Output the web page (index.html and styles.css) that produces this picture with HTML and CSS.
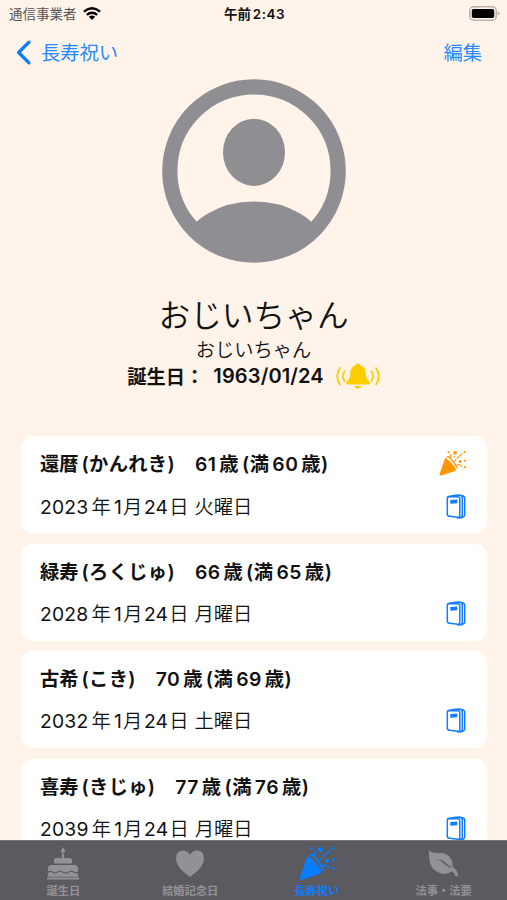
FILE: index.html
```html
<!DOCTYPE html>
<html lang="ja">
<head>
<meta charset="utf-8">
<meta name="viewport" content="width=device-width, initial-scale=1">
<title>長寿祝い</title>
<link rel="stylesheet" href="styles.css">
</head>
<body>
<svg class="defs" width="0" height="0" aria-hidden="true">
  <symbol id="party" viewBox="0 0 36 34">
    <path d="M9.600 10.600C13 13 19.500 19.500 22.300 24.800Q23 27 20.500 28L3 33.700Q.2 34.200 .8 31.500L7.500 12.200Q8.200 10 9.600 10.600Z"/>
    <path d="M10.800 9.500Q11.800 6.800 16 11.500T24.500 24.300" fill="none" stroke="currentColor" stroke-width="1.800"/>
    <path d="M19.500 15.500L22.500 12.500M24.300 10.800L30.800 4.600M14.800 10.500Q17 8.500 15.200 5.800M23.500 20Q26.500 17.500 30.500 21.500" fill="none" stroke="currentColor" stroke-width="1.400" stroke-linecap="round"/>
    <circle cx="21.500" cy="3.400" r="2.500"/><circle cx="28.200" cy="15" r="2"/>
    <circle cx="12.700" cy="2.300" r="1.300"/><circle cx="34" cy="2.500" r="1.400"/>
    <circle cx="34.500" cy="14" r="1.400"/><circle cx="34.400" cy="22.500" r="1.400"/>
    <circle cx="20.500" cy="9" r="1"/>
  </symbol>
  <symbol id="book" viewBox="0 0 20 25">
    <g fill="none" stroke="currentColor" stroke-width="1.500" stroke-linejoin="round" stroke-linecap="round">
      <path d="M1.300 4Q1.300 2.600 2.800 2.500L11.800 2.700Q13.800 2.800 13.800 4.700V21.300Q13.800 23.400 11.800 23.200L3.500 22.300Q1.300 22.100 1.300 20Z"/>
      <path d="M2 2.800Q8 1.300 13.200 1Q16.300 1.300 16.300 4V21.200Q16.300 23.800 11.500 23.900M15 1.600Q18.700 1.900 18.700 4.300V20.800Q18.700 23.300 14.500 23.900"/>
    </g>
    <path d="M4.300 6L11.300 5.500V9.200L4.300 9.800Z"/>
  </symbol>
</svg>
<div class="screen">
  <header class="status">
    <div class="carrier"><span>通信事業者</span>
      <svg class="wifi" viewBox="0 0 18 13"><g fill="none" stroke="#000" stroke-width="2.400"><path d="M.9 4.700Q9-2 17.100 4.700"/><path d="M3.800 7.900Q9 3.600 14.200 7.900"/></g><path fill="#000" d="M9 13L5.900 9.800Q9 7.300 12.100 9.800Z"/></svg>
    </div>
    <div class="clock">午前<b>2:43</b></div>
    <svg class="battery" viewBox="0 0 31 15"><rect x=".8" y=".8" width="26.400" height="13.400" rx="4" fill="none" stroke="#b9b1aa" stroke-width="1.500"/><rect x="2.800" y="2.900" width="22.400" height="9.200" rx="1.800" fill="#000"/><path d="M28.600 5.200Q30.600 6 30.600 7.500T28.600 9.800Z" fill="#b9b1aa"/></svg>
  </header>
  <nav class="navbar">
    <a class="back"><svg viewBox="0 0 15 25"><path d="M13 2.200L2.600 12.500L13 22.800" fill="none" stroke="currentColor" stroke-width="3.200" stroke-linecap="round" stroke-linejoin="round"/></svg><span>長寿祝い</span></a>
    <a class="edit">編集</a>
  </nav>
  <section class="profile">
    <svg class="avatar" viewBox="0 0 184 184"><defs><clipPath id="disc"><circle cx="92" cy="92" r="90"/></clipPath></defs><circle cx="92" cy="92" r="84.200" fill="none" stroke="currentColor" stroke-width="15.200"/><ellipse cx="92" cy="73.300" rx="31" ry="33.600"/><path clip-path="url(#disc)" d="M31 147Q36 140 46 134.500Q66 122.500 92 122.500T138 134.500Q148 140 153 147V184H31Z"/></svg>
    <h1>おじいちゃん</h1>
    <p class="kana">おじいちゃん</p>
    <div class="birthday"><span class="label">誕生日：</span><span class="date">1963/01/24</span>
      <svg class="bell" viewBox="0 0 44 26"><path d="M22 .5Q24 .5 24.700 2.600Q29.500 4 29.800 10.200Q30 15.500 32.200 17.500Q34 19.300 34 20.200Q34 21.500 32.300 21.500H11.700Q10 21.500 10 20.200Q10 19.300 11.800 17.500Q14 15.500 14.200 10.200Q14.500 4 19.300 2.600Q20 .5 22 .5ZM18.300 23H25.700Q24.700 25.700 22 25.700T18.300 23Z"/><path d="M8.500 8.300Q5.300 13.200 8.500 18.100M4 5Q-1.600 13.200 4 21.400M35.500 8.300Q38.700 13.200 35.500 18.100M40 5Q45.600 13.200 40 21.400" fill="none" stroke="currentColor" stroke-width="1.800" stroke-linecap="round"/></svg>
    </div>
  </section>
  <main class="list">
    <article class="card first">
      <div class="row title"><h2><span>還暦</span><span class="paren">(かんれき)</span><span class="age">61<i>歳</i><i>(満</i><i>60</i><i>歳</i>)</span></h2><svg class="party"><use href="#party"/></svg></div>
      <div class="row when"><p><span>2023</span><i>年</i><i>1</i><i>月</i><span class="day">24</span><i>日</i><span class="week">火曜日</span></p><svg class="book"><use href="#book"/></svg></div>
    </article>
    <article class="card">
      <div class="row title"><h2><span>緑寿</span><span class="paren">(ろくじゅ)</span><span class="age">66<i>歳</i><i>(満</i><i>65</i><i>歳</i>)</span></h2></div>
      <div class="row when"><p><span>2028</span><i>年</i><i>1</i><i>月</i><span class="day">24</span><i>日</i><span class="week">月曜日</span></p><svg class="book"><use href="#book"/></svg></div>
    </article>
    <article class="card">
      <div class="row title"><h2><span>古希</span><span class="paren">(こき)</span><span class="age">70<i>歳</i><i>(満</i><i>69</i><i>歳</i>)</span></h2></div>
      <div class="row when"><p><span>2032</span><i>年</i><i>1</i><i>月</i><span class="day">24</span><i>日</i><span class="week">土曜日</span></p><svg class="book"><use href="#book"/></svg></div>
    </article>
    <article class="card">
      <div class="row title"><h2><span>喜寿</span><span class="paren">(きじゅ)</span><span class="age">77<i>歳</i><i>(満</i><i>76</i><i>歳</i>)</span></h2></div>
      <div class="row when"><p><span>2039</span><i>年</i><i>1</i><i>月</i><span class="day">24</span><i>日</i><span class="week">月曜日</span></p><svg class="book"><use href="#book"/></svg></div>
    </article>
  </main>
  <footer class="tabs">
    <a class="tab"><svg viewBox="0 0 34 34"><path d="M15.900 7H18.100V12H15.900ZM17 0Q19.200 3 18.900 4.500Q18.600 6.500 17 6.500T15.100 4.500Q14.800 3 17 0ZM10.500 11H23.500Q26 11 26 13.500V16.500H8V13.500Q8 11 10.500 11ZM5.500 18H28.500Q32 18 32 21.500V24.500Q29.800 26 27.500 24.300Q25 22.600 22.500 24.500Q19.700 26.500 17 24.500Q14.300 22.600 11.500 24.500Q8.700 26.300 6.500 24.500Q4.200 22.800 2 24.500V21.500Q2 18 5.500 18ZM2 25.900Q4.500 24.100 6.500 25.800Q9 27.400 11.500 25.800Q14.300 23.800 17 25.800Q19.700 27.800 22.500 25.800Q25 23.900 27.500 25.600Q30 27.100 32 25.900V29.700H2ZM1 30.400H33V32.500H1Z"/></svg><span>誕生日</span></a>
    <a class="tab"><svg viewBox="0 0 34 34"><path d="M17 29.800Q3 20.500 3 11.700Q3 3.900 9.500 3.500Q14.500 3.300 17 8Q19.500 3.300 24.500 3.500Q31 3.900 31 11.700Q31 20.500 17 29.800Z"/></svg><span>結婚記念日</span></a>
    <a class="tab active"><svg class="party"><use href="#party"/></svg><span>長寿祝い</span></a>
    <a class="tab"><svg viewBox="0 0 34 34"><path d="M2 3.500Q5 6 11 6Q20 5.500 23.500 11Q26 14.500 25.500 19.500Q29.500 22.200 31 27Q31 29.500 29.300 29.500Q28.200 29.500 27.500 26.700Q26.500 24.700 24.500 24.200Q20 28.500 13 26Q4 23 2.500 14Q1.500 8 2 3.500ZM9 12.500Q14 13.200 17 16.500T24.500 21L24 19.400Q20.500 18.500 17.800 15.300T9 12.500Z" fill-rule="evenodd"/></svg><span>法事・法要</span></a>
  </footer>
</div>
</body>
</html>
```

FILE: styles.css
```css
* { box-sizing: border-box; }
body { margin: 0; background: #fff3ea; color: #111; font-family: Inter, "Noto Sans CJK JP", sans-serif; }
h1, h2, p { margin: 0; font-weight: 400; }
i { font-style: normal; }
svg { display: block; flex: none; fill: currentColor; overflow: visible; }
.defs { position: absolute; }
.screen { width: 507px; height: 900px; overflow: hidden; display: flex; flex-direction: column; }
.status { flex: none; height: 27px; padding: 0 7px 0 9px; display: grid; grid-template-columns: 1fr auto 1fr; align-items: center; font-size: 13.500px; line-height: 20px; }
.carrier { display: flex; align-items: center; gap: 6px; color: #555; }
.wifi { width: 18px; height: 13px; }
.clock { font-weight: 600; font-size: 13.400px; color: #111; }
.clock b { font-weight: 600; margin-left: 2px; letter-spacing: .5px; }
.battery { width: 31px; height: 15px; justify-self: end; }
.navbar { flex: none; height: 50px; padding: 0 25px 0 16px; display: flex; align-items: center; justify-content: space-between; color: #268bff; font-size: 19.300px; }
.back { display: flex; align-items: center; gap: 10px; }
.back svg { width: 15px; height: 25px; color: #087dff; }
.profile { flex: none; height: 359px; padding-top: 2px; display: flex; flex-direction: column; align-items: center; }
.avatar { width: 184px; height: 184px; color: #8e8e93; }
.profile h1 { margin-top: 29px; height: 47px; line-height: 47px; font-size: 31.700px; font-weight: 350; }
.kana { height: 24px; line-height: 24px; font-size: 19.300px; font-weight: 350; margin-top: -1px; }
.birthday { display: flex; align-items: center; height: 28px; font-size: 19.300px; font-weight: 600; }
.date { margin-left: 9px; font-size: 20px; letter-spacing: .15px; }
.bell { width: 44px; height: 26px; margin-left: 12px; margin-top: -1px; color: #ffcc00; }
.list { flex: 1; min-height: 0; overflow: hidden; padding: 0 20px 0 21px; display: flex; flex-direction: column; gap: 10.500px; }
.card { flex: none; height: 97px; padding: 15px 20px 0 19px; border-radius: 12px; background: #fff; }
.row { display: flex; align-items: center; justify-content: space-between; height: 24px; }
.when { margin-top: 18px; }
.first .when { margin-top: 19px; }
.when .book { margin-top: 1px; }
.row h2 { font-size: 19.300px; font-weight: 600; white-space: nowrap; }
.paren { margin-left: 3px; letter-spacing: .3px; }
.age { margin-left: 20px; letter-spacing: .5px; }
.age i { margin-left: 2.900px; }
.row p { font-size: 19.300px; font-weight: 350; white-space: nowrap; }
.row p > span:first-child, .day, .row p i:nth-of-type(2) { font-weight: 400; letter-spacing: .2px; }
.row p i { margin-left: 3.200px; }
.row p i:nth-of-type(3), .row p i:nth-of-type(4) { margin-left: 1px; }
.day { margin-left: 1.500px; }
.week { margin-left: 6px; }
.title .party { width: 27px; height: 26px; margin-right: 1px; color: #ff9500; }
.book { width: 20px; height: 25px; margin-right: 1px; color: #147cff; }
.tabs { flex: none; height: 60px; display: grid; grid-template-columns: repeat(4, 1fr); background: #5c5a61; color: #929295; border-top: 1px solid #77757a; }
.tab { display: flex; flex-direction: column; align-items: center; padding-top: 6px; }
.tab svg { width: 34px; height: 34px; }
.tab .party { width: 36px; margin-top: -1px; margin-bottom: 1px; }
.tab span { font-size: 11.300px; line-height: 16px; margin-top: 2px; font-weight: 600; }
.active { color: #087dff; }
.tab.active span { font-weight: 700; }
```
